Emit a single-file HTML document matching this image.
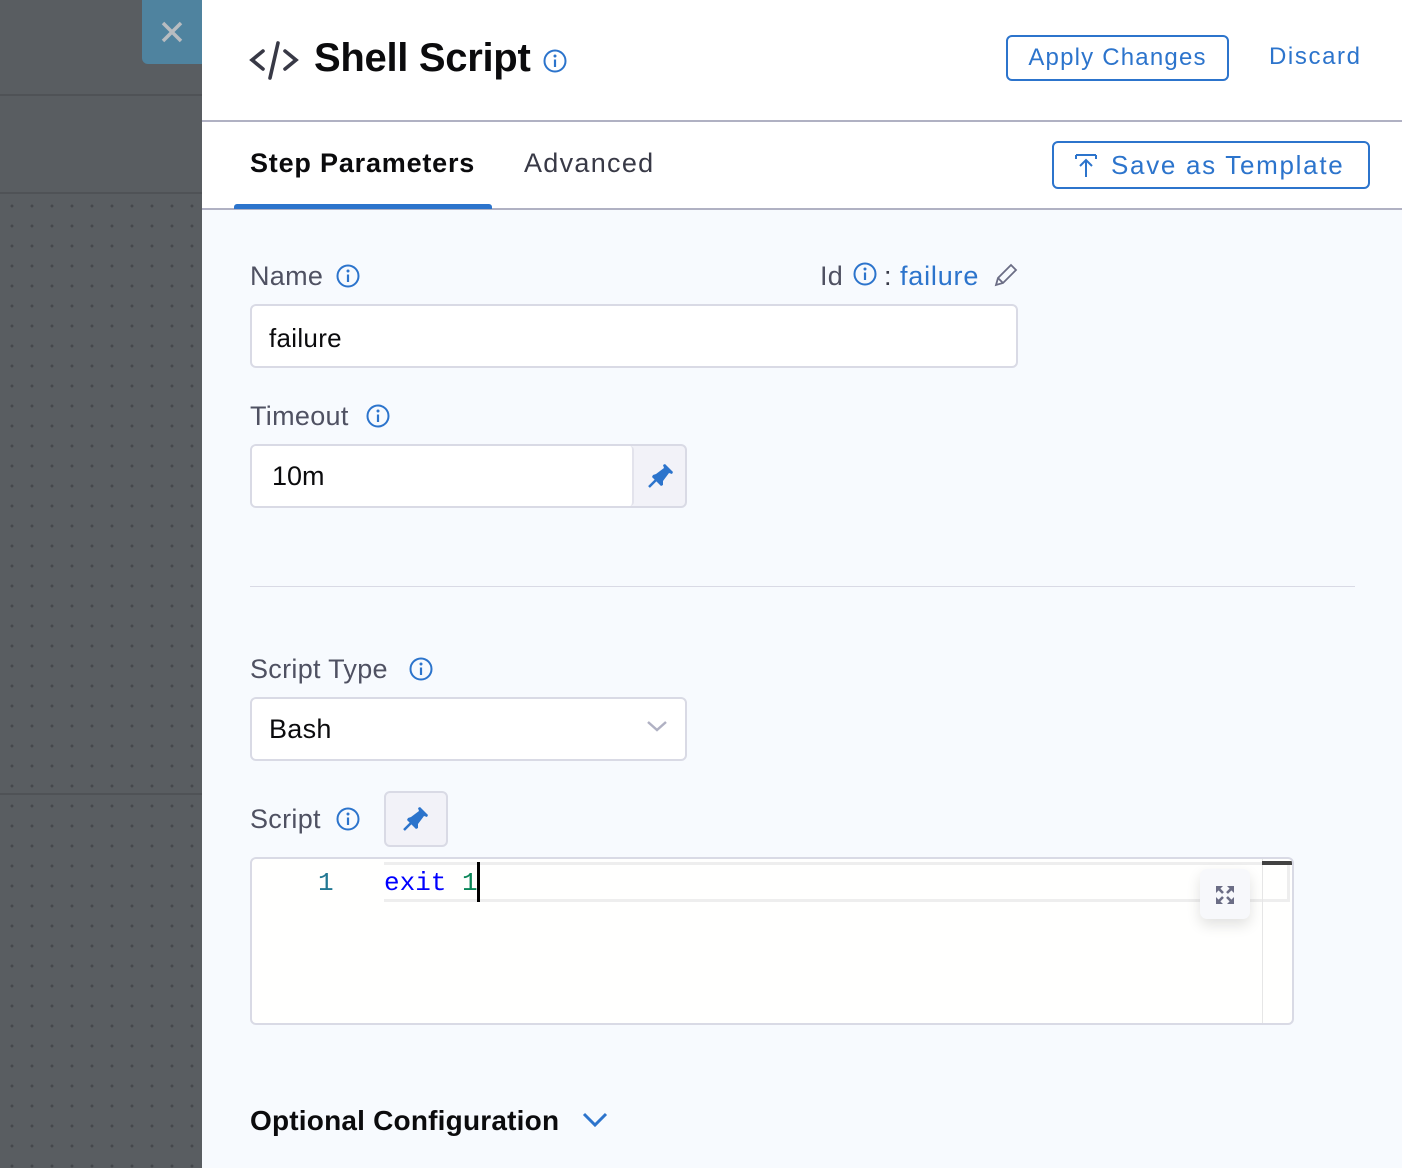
<!DOCTYPE html>
<html><head><meta charset="utf-8"><style>
*{margin:0;padding:0;box-sizing:border-box}
body{width:1402px;height:1168px;overflow:hidden;position:relative;font-family:"Liberation Sans",sans-serif;background:#f7fafe}
.abs{position:absolute}
#left{left:0;top:0;width:202px;height:1168px;background-color:#595d61;
background-image:radial-gradient(circle,#45484c 1.3px,transparent 1.6px);background-size:20px 20px;background-position:2px 196px}
.lbl{font-size:27px;color:#4f5162;letter-spacing:0.3px}
.blue{color:#2c74cc}
.inp{background:#fff;border:2px solid #d9dae5;border-radius:6px}
</style></head><body>
<div id="left" class="abs"></div>
<div class="abs" style="left:0;top:0;width:202px;height:96px;background:#595d61;border-bottom:2px solid #4f5256"></div>
<div class="abs" style="left:0;top:98px;width:202px;height:96px;background:#595d61;border-bottom:2px solid #4f5256"></div>
<div class="abs" style="left:0;top:793px;width:202px;height:2px;background:#4f5256"></div>
<div class="abs" style="left:142px;top:0;width:62px;height:64px;background:#4f839f;border-radius:0 0 0 6px"></div>
<svg class="abs" style="left:160px;top:20px" width="24" height="24"><path d="M3 3L21 21M21 3L3 21" stroke="#b8bcc0" stroke-width="3.5"/></svg>

<div class="abs" style="left:202px;top:0;width:1200px;height:208px;background:#fff"></div>
<div class="abs" style="left:202px;top:120px;width:1200px;height:2px;background:#b0b1c3"></div>
<div class="abs" style="left:202px;top:208px;width:1200px;height:2px;background:#b0b1c3"></div>
<div class="abs" style="left:234px;top:204px;width:258px;height:5px;background:#2c74cc;border-radius:3px 3px 0 0"></div>

<svg class="abs" style="left:248px;top:40px" width="52" height="40"><path d="M15 11L4 20L15 29M37 11L48 20L37 29" fill="none" stroke="#383946" stroke-width="3.6" stroke-linecap="round"/><path d="M30 3L22 38" stroke="#383946" stroke-width="3.6" stroke-linecap="round"/></svg>
<div class="abs" style="left:314px;top:36px;font-size:40px;font-weight:bold;color:#0b0b0d;letter-spacing:-0.3px">Shell Script</div>
<svg class="abs" style="left:543px;top:49px" width="24" height="24"><circle cx="12" cy="12" r="10.5" fill="none" stroke="#2c74cc" stroke-width="2"/><circle cx="12" cy="7" r="1.5" fill="#2c74cc"/><path d="M12 10.5V18" stroke="#2c74cc" stroke-width="2.2"/></svg>

<div class="abs blue" style="left:1006px;top:35px;width:223px;height:46px;border:2px solid #2c74cc;border-radius:6px;font-size:24px;text-align:center;line-height:42px;letter-spacing:1.2px;font-weight:500">Apply Changes</div>
<div class="abs blue" style="left:1269px;top:43px;font-size:24px;letter-spacing:1.6px">Discard</div>

<div class="abs" style="left:250px;top:148px;font-size:27px;font-weight:bold;color:#0b0b0d;letter-spacing:0.8px">Step Parameters</div>
<div class="abs" style="left:524px;top:148px;font-size:27px;color:#383946;letter-spacing:1.3px">Advanced</div>

<div class="abs blue" style="left:1052px;top:141px;width:318px;height:48px;border:2px solid #2c74cc;border-radius:6px;font-size:26px;line-height:44px;padding-left:57px;letter-spacing:1.7px">Save as Template</div>
<svg class="abs" style="left:1073px;top:152px" width="26" height="26"><path d="M3 3H23M3 3V7M23 3V7M13 8V25M7 14L13 8L19 14" fill="none" stroke="#2c74cc" stroke-width="2"/></svg>

<div class="abs lbl" style="left:250px;top:261px">Name</div>
<svg class="abs" style="left:336px;top:264px" width="24" height="24"><circle cx="12" cy="12" r="10.5" fill="none" stroke="#2c74cc" stroke-width="2"/><circle cx="12" cy="7" r="1.5" fill="#2c74cc"/><path d="M12 10.5V18" stroke="#2c74cc" stroke-width="2.2"/></svg>
<div class="abs lbl" style="left:820px;top:261px">Id</div>
<svg class="abs" style="left:853px;top:262px" width="24" height="24"><circle cx="12" cy="12" r="10.5" fill="none" stroke="#2c74cc" stroke-width="2"/><circle cx="12" cy="7" r="1.5" fill="#2c74cc"/><path d="M12 10.5V18" stroke="#2c74cc" stroke-width="2.2"/></svg>
<div class="abs" style="left:884px;top:261px;font-size:27px;color:#383946">:</div>
<div class="abs blue" style="left:900px;top:261px;font-size:27px;letter-spacing:0.8px">failure</div>
<svg class="abs" style="left:992px;top:263px" width="26" height="26"><path d="M4 22L6 15L19 2L24 7L11 20Z M6 15L11 20" fill="none" stroke="#6b6d85" stroke-width="1.8"/></svg>
<div class="abs inp" style="left:250px;top:304px;width:768px;height:64px;font-size:26px;padding:17px 0 0 17px;color:#0b0b0d;letter-spacing:0.3px">failure</div>

<div class="abs lbl" style="left:250px;top:401px">Timeout</div>
<svg class="abs" style="left:366px;top:404px" width="24" height="24"><circle cx="12" cy="12" r="10.5" fill="none" stroke="#2c74cc" stroke-width="2"/><circle cx="12" cy="7" r="1.5" fill="#2c74cc"/><path d="M12 10.5V18" stroke="#2c74cc" stroke-width="2.2"/></svg>
<div class="abs" style="left:250px;top:444px;width:437px;height:64px;background:#f2f2f8;border:2px solid #d9dae5;border-radius:6px"></div>
<div class="abs" style="left:252px;top:446px;width:382px;height:60px;background:#fff;border-radius:4px;border-right:2px solid #e3e3ec;font-size:27px;padding:15px 0 0 20px;color:#0b0b0d">10m</div>
<svg class="abs" style="left:647px;top:463px" width="28" height="26"><path d="M2 24L11 15" stroke="#2c74cc" stroke-width="2.5"/><path d="M9 11L17 5L16 2L18 1L26 9L25 11L22 10L16 18L16 22L14 23L5 14L6 12Z" fill="#2c74cc"/></svg>

<div class="abs" style="left:250px;top:586px;width:1105px;height:1px;background:#d9dae5"></div>

<div class="abs lbl" style="left:250px;top:654px">Script Type</div>
<svg class="abs" style="left:409px;top:657px" width="24" height="24"><circle cx="12" cy="12" r="10.5" fill="none" stroke="#2c74cc" stroke-width="2"/><circle cx="12" cy="7" r="1.5" fill="#2c74cc"/><path d="M12 10.5V18" stroke="#2c74cc" stroke-width="2.2"/></svg>
<div class="abs inp" style="left:250px;top:697px;width:437px;height:64px;font-size:27px;padding:15px 0 0 17px;color:#0b0b0d;letter-spacing:0.3px">Bash</div>
<svg class="abs" style="left:646px;top:719px" width="22" height="14"><path d="M2 3L11 11L20 3" fill="none" stroke="#b0b1c3" stroke-width="2.5"/></svg>

<div class="abs lbl" style="left:250px;top:804px">Script</div>
<svg class="abs" style="left:336px;top:807px" width="24" height="24"><circle cx="12" cy="12" r="10.5" fill="none" stroke="#2c74cc" stroke-width="2"/><circle cx="12" cy="7" r="1.5" fill="#2c74cc"/><path d="M12 10.5V18" stroke="#2c74cc" stroke-width="2.2"/></svg>
<div class="abs" style="left:384px;top:791px;width:64px;height:56px;background:#f2f2f8;border:2px solid #d9dae5;border-radius:6px"></div>
<svg class="abs" style="left:402px;top:806px" width="28" height="26"><path d="M2 24L11 15" stroke="#2c74cc" stroke-width="2.5"/><path d="M9 11L17 5L16 2L18 1L26 9L25 11L22 10L16 18L16 22L14 23L5 14L6 12Z" fill="#2c74cc"/></svg>

<div class="abs" style="left:250px;top:857px;width:1044px;height:168px;background:#fffffe;border:2px solid #d9dae5;border-radius:6px;overflow:hidden">
 <div class="abs" style="left:132px;top:3px;width:906px;height:40px;border:3px solid #eeeeee;border-left:none"></div>
 <div class="abs" style="left:1010px;top:0;width:1px;height:168px;background:#e6e6e6"></div>
 <div class="abs" style="left:1010px;top:2px;width:30px;height:4px;background:#424242"></div>
 <div class="abs" style="left:66px;top:9px;font-family:'Liberation Mono',monospace;font-size:26px;color:#237893">1</div>
 <div class="abs" style="left:132px;top:9px;font-family:'Liberation Mono',monospace;font-size:26px;color:#0000ff">exit <span style="color:#098658">1</span></div>
 <div class="abs" style="left:225px;top:3px;width:3px;height:40px;background:#000"></div>
 <div class="abs" style="left:948px;top:10px;width:50px;height:50px;background:#f7f8fb;border-radius:7px;box-shadow:0 6px 14px rgba(0,0,0,0.12)"></div>
 <svg class="abs" style="left:962px;top:25px" width="22" height="22"><path d="M2 2H9L2 9ZM20 2H13L20 9ZM2 20H9L2 13ZM20 20H13L20 13Z" fill="#6b6d85"/><path d="M3 3L9 9M19 3L13 9M3 19L9 13M19 19L13 13" stroke="#6b6d85" stroke-width="2.6"/></svg>
</div>

<div class="abs" style="left:250px;top:1105px;font-size:28px;font-weight:bold;color:#0b0b0d;letter-spacing:0.2px">Optional Configuration</div>
<svg class="abs" style="left:581px;top:1110px" width="28" height="20"><path d="M3 4L14 15L25 4" fill="none" stroke="#2c74cc" stroke-width="3"/></svg>
</body></html>
